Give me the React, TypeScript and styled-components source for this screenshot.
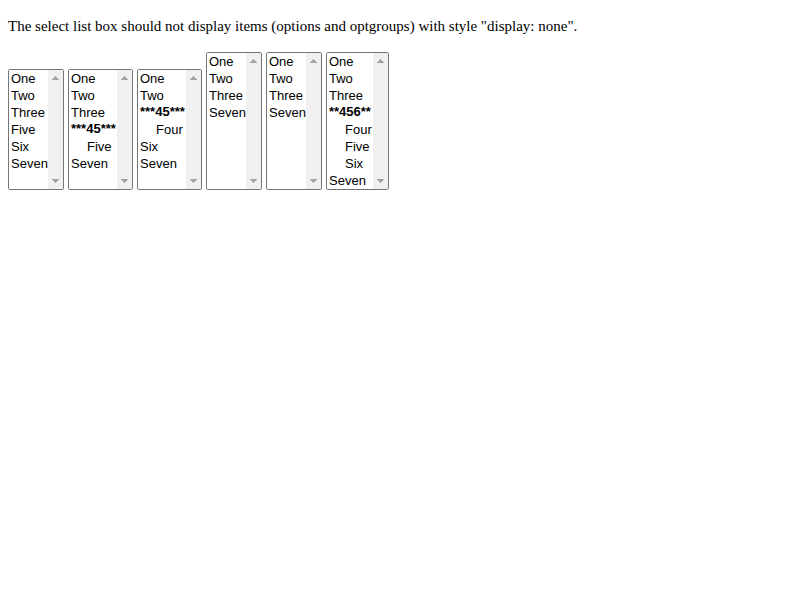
import React from "react";
import styled, { createGlobalStyle } from "styled-components";

const GlobalStyle = createGlobalStyle`
  body {
    margin: 0;
    background: #fff;
    color: #000;
    font: 15px/20px "Liberation Serif", "Times New Roman", serif;
  }
`;

const Page = styled.main`
  padding: 16px 8px;
`;

const Description = styled.p`
  margin: 0 0 16px;
`;

const Lists = styled.div`
  display: flex;
  flex-wrap: wrap;
  align-items: flex-end;
  gap: 4px;
`;

const Frame = styled.div`
  display: flex;
  border: 1px solid #767676;
  border-radius: 2px;
  background: #fff;
  overflow: hidden;
`;

const ListBox = styled.select<{ $width: number }>`
  width: ${(p) => p.$width}px;
  margin: 0;
  padding: 0;
  border: 0;
  border-radius: 0;
  outline: 0;
  background: #fff;
  color: #000;
  font-family: "Liberation Sans", Arial, sans-serif;
  font-size: 13px;
  scrollbar-width: none;

  option,
  optgroup {
    line-height: 16px;
  }

  option {
    min-height: 16px;
    padding: 1px 2px 0;
  }

  optgroup option {
    padding-left: 18px;
  }

  optgroup option::before {
    content: none;
  }
`;

const ScrollTrack = styled.div`
  display: flex;
  flex-direction: column;
  justify-content: space-between;
  align-items: center;
  width: 15px;
  padding: 5px 0;
  box-sizing: border-box;
  background: #f0f0f0;
`;

const Arrow = styled.svg`
  display: block;
  width: 9px;
  height: 6px;
  fill: #a3a3a3;
`;

type Group = { label: string; items: string[] };
type List = { name: string; rows: number; width: number; entries: (string | Group)[] };

const lists: List[] = [
  { name: "List 1", rows: 7, width: 39, entries: ["One", "Two", "Three", "Five", "Six", "Seven"] },
  { name: "List 2", rows: 7, width: 48, entries: ["One", "Two", "Three", { label: "***45***", items: ["Five"] }, "Seven"] },
  { name: "List 3", rows: 7, width: 48, entries: ["One", "Two", { label: "***45***", items: ["Four"] }, "Six", "Seven"] },
  { name: "List 4", rows: 8, width: 39, entries: ["One", "Two", "Three", "Seven"] },
  { name: "List 5", rows: 8, width: 39, entries: ["One", "Two", "Three", "Seven"] },
  { name: "List 6", rows: 8, width: 46, entries: ["One", "Two", "Three", { label: "**456**", items: ["Four", "Five", "Six"] }, "Seven"] },
];

export default function App() {
  return (
    <Page>
      <GlobalStyle />
      <Description>
        The select list box should not display items (options and optgroups) with style "display: none".
      </Description>
      <Lists>
        {lists.map((list) => (
          <Frame key={list.name}>
            <ListBox aria-label={list.name} multiple size={list.rows} $width={list.width}>
              {list.entries.map((entry) =>
                typeof entry === "string" ? (
                  <option key={entry}>{entry}</option>
                ) : (
                  <optgroup key={entry.label} label={entry.label}>
                    {entry.items.map((item) => (
                      <option key={item}>{item}</option>
                    ))}
                  </optgroup>
                )
              )}
            </ListBox>
            <ScrollTrack aria-hidden="true">
              <Arrow viewBox="0 0 9 6">
                <path d="M4 1h1v1h1v1h1v1h1v1H1V4h1V3h1V2h1z" />
              </Arrow>
              <Arrow viewBox="0 0 9 6">
                <path d="M1 1h7v1H7v1H6v1H5v1H4V4H3V3H2V2H1z" />
              </Arrow>
            </ScrollTrack>
          </Frame>
        ))}
      </Lists>
    </Page>
  );
}
